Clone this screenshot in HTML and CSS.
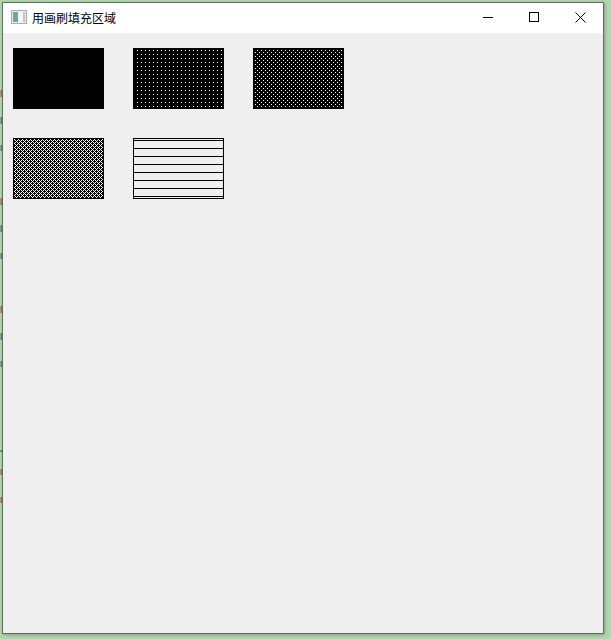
FILE: index.html
```html
<!DOCTYPE html>
<html lang="zh-CN">
<head>
  <meta charset="UTF-8" />
  <title>用画刷填充区域</title>
  <link rel="stylesheet" href="styles.css">
</head>
<body>

<!-- desktop icons peeking out at the left of the window -->
<svg class="peek" width="2" height="639">
  <rect x="0.5" y="90" width="1.5" height="7" fill="#b5525f"/>
  <rect x="0.5" y="117" width="1.5" height="7" fill="#6f6a92"/>
  <rect x="0.5" y="145" width="1.5" height="6" fill="#6f6a92"/>
  <rect x="0.5" y="198" width="1.5" height="7" fill="#b5525f"/>
  <rect x="0.5" y="225" width="1.5" height="7" fill="#6f6a92"/>
  <rect x="0.5" y="253" width="1.5" height="6" fill="#6f6a92"/>
  <rect x="0.5" y="306" width="1.5" height="7" fill="#b5525f"/>
  <rect x="0.5" y="333" width="1.5" height="7" fill="#6f6a92"/>
  <rect x="0.5" y="361" width="1.5" height="6" fill="#6f6a92"/>
  <rect x="0.5" y="450" width="1.5" height="2" fill="#2f6f6a"/>
  <rect x="0.5" y="469" width="1.5" height="6" fill="#b5525f"/>
  <rect x="0.5" y="497" width="1.5" height="6" fill="#b5525f"/>
</svg>

<div class="window">
  <div class="titlebar">
    <svg class="app-icon" width="16" height="14" viewBox="0 0 16 14">
      <rect x="0.5" y="0.5" width="15" height="13" fill="#e8ecec" stroke="#a8adb0"/>
      <rect x="2" y="2" width="5" height="10" fill="#6fa5a2"/>
      <rect x="7" y="2" width="5" height="10" fill="#f4f6f6"/>
      <rect x="12" y="2" width="2" height="10" fill="#b4d0ba"/>
    </svg>
    <span class="title">用画刷填充区域</span>
    <div class="controls">
      <svg width="11" height="11" viewBox="0 0 11 11"><path d="M0 5.5H10" stroke="#000"/></svg>
      <svg width="11" height="11" viewBox="0 0 11 11"><rect x="0.5" y="0.5" width="9" height="9" fill="none" stroke="#000"/></svg>
      <svg width="11" height="11" viewBox="0 0 11 11"><path d="M0.5 0.5L10.5 10.5M10.5 0.5L0.5 10.5" stroke="#000"/></svg>
    </div>
  </div>

  <div class="swatches">
    <svg class="swatch" width="91" height="61">
      <rect x="0.5" y="0.5" width="90" height="60" fill="#000" stroke="#000"/>
    </svg>
    <svg class="swatch" width="91" height="61" shape-rendering="crispEdges">
      <defs>
        <pattern id="dense1" width="4" height="4" patternUnits="userSpaceOnUse">
          <rect width="4" height="4" fill="#000"/>
          <rect x="0" y="2" width="1" height="1" fill="#fff"/>
        </pattern>
      </defs>
      <rect width="91" height="61" fill="url(#dense1)"/>
      <rect x="0.5" y="0.5" width="90" height="60" fill="none" stroke="#000"/>
    </svg>
    <svg class="swatch" width="91" height="61" shape-rendering="crispEdges">
      <defs>
        <pattern id="dense2" width="4" height="4" patternUnits="userSpaceOnUse">
          <rect width="4" height="4" fill="#000"/>
          <rect x="0" y="2" width="1" height="1" fill="#fff"/>
          <rect x="2" y="0" width="1" height="1" fill="#fff"/>
        </pattern>
      </defs>
      <rect width="91" height="61" fill="url(#dense2)"/>
      <rect x="0.5" y="0.5" width="90" height="60" fill="none" stroke="#000"/>
    </svg>
    <svg class="swatch" width="91" height="61" shape-rendering="crispEdges">
      <defs>
        <pattern id="dense3" width="4" height="4" patternUnits="userSpaceOnUse">
          <rect width="4" height="4" fill="#000"/>
          <rect x="0" y="0" width="1" height="1" fill="#fff"/>
          <rect x="2" y="0" width="1" height="1" fill="#fff"/>
          <rect x="1" y="1" width="1" height="1" fill="#fff"/>
          <rect x="0" y="2" width="1" height="1" fill="#fff"/>
          <rect x="2" y="2" width="1" height="1" fill="#fff"/>
          <rect x="3" y="3" width="1" height="1" fill="#fff"/>
        </pattern>
      </defs>
      <rect width="91" height="61" fill="url(#dense3)"/>
      <rect x="0.5" y="0.5" width="90" height="60" fill="none" stroke="#000"/>
    </svg>
    <svg class="swatch" width="91" height="61" shape-rendering="crispEdges">
      <defs>
        <pattern id="hor" width="8" height="8" patternUnits="userSpaceOnUse">
          <rect y="2" width="8" height="1" fill="#000"/>
        </pattern>
      </defs>
      <rect width="91" height="61" fill="url(#hor)"/>
      <rect x="0.5" y="0.5" width="90" height="60" fill="none" stroke="#000"/>
    </svg>
  </div>
</div>

</body>
</html>
```

FILE: styles.css
```css
* { box-sizing: border-box; }

html, body {
  height: 100%;
}

body {
  margin: 0;
  padding: 2px 7px 5px 2px;
  background: #b6d5b2;
  overflow: hidden;
  font-family: "Noto Sans CJK SC", "Liberation Sans", sans-serif;
}

.peek {
  position: absolute;
  left: 0;
  top: 0;
}

.window {
  width: 602px;
  height: 632px;
  background: #efefef;
  border: 1px solid #5f6f5f;
  box-shadow: 1px 1px 3px rgba(60, 90, 60, 0.45);
}

.titlebar {
  display: flex;
  align-items: center;
  height: 30px;
  background: #fff;
  padding-left: 8px;
  padding-bottom: 2px;
}

.app-icon {
  flex: none;
}

.title {
  margin-left: 5px;
  font-size: 12px;
  color: #000;
}

.controls {
  display: flex;
  gap: 35px;
  margin-left: auto;
  padding-right: 17px;
}

.controls svg {
  display: block;
}

.swatches {
  display: grid;
  grid-template-columns: repeat(3, 91px);
  gap: 29px;
  padding: 15px 10px;
}

.swatch {
  display: block;
}
```
